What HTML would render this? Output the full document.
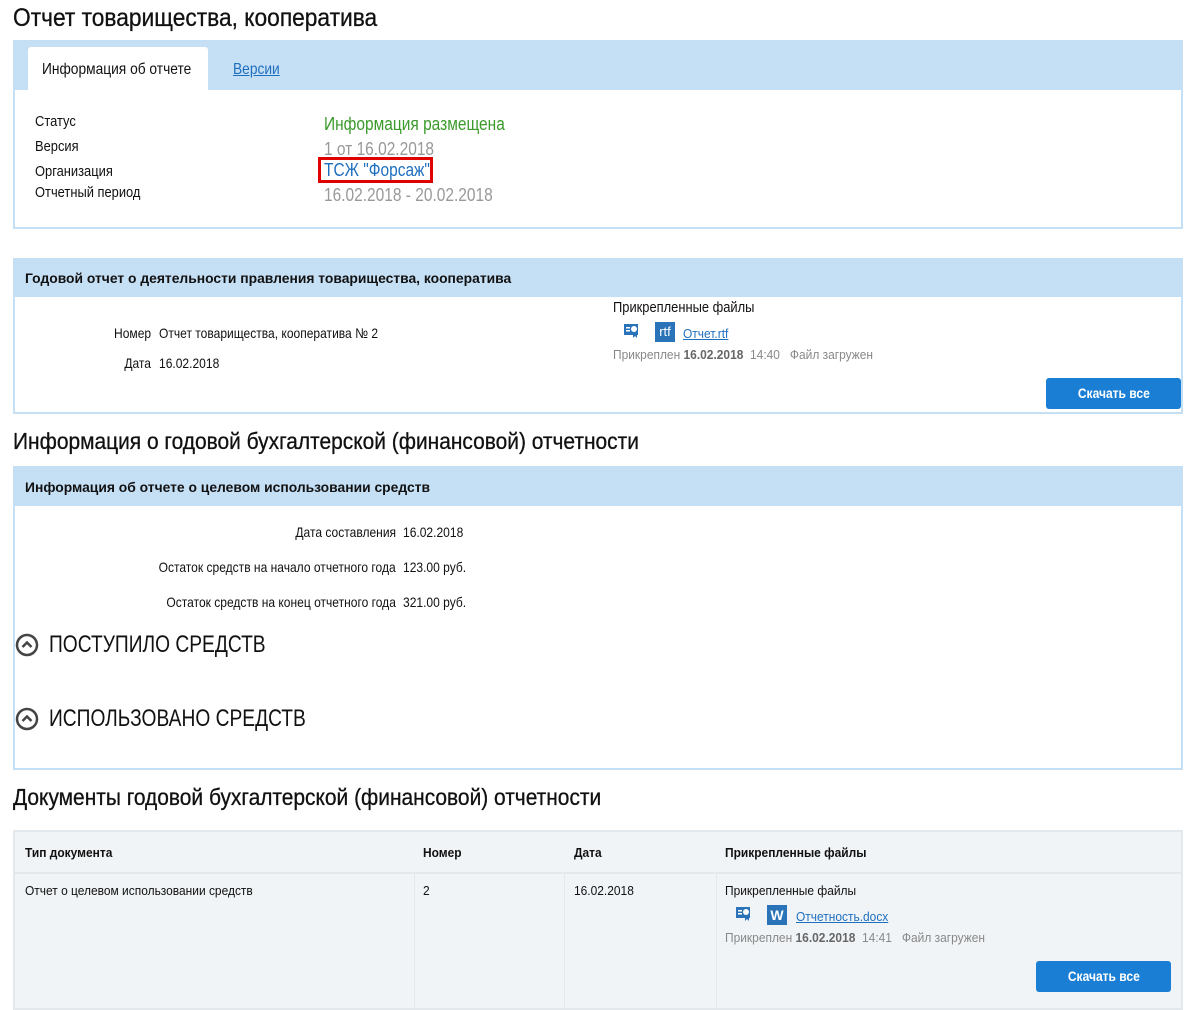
<!DOCTYPE html>
<html><head><meta charset="utf-8"><style>
*{margin:0;padding:0;box-sizing:border-box}
body{width:1198px;height:1004px;background:#fff;font-family:"Liberation Sans",sans-serif;color:#111;position:relative;overflow:hidden}
.a{position:absolute;white-space:nowrap}
.c{transform:scaleX(.86);transform-origin:0 50%}
.h{transform:scaleX(.91);transform-origin:0 50%;-webkit-text-stroke:.3px #111}
.s{transform:scaleX(.92);transform-origin:0 50%}
.b{transform:scaleX(.99);transform-origin:0 50%}
.r{transform:scaleX(.86);transform-origin:100% 50%;text-align:right}
.box{position:absolute;left:13px;width:1170px;border:2px solid #c5dff5;background:#fff}
.hd{position:absolute;left:0;right:0;top:0;background:#c5dff5}
.btn{position:absolute;background:#1a7fd4;border-radius:3px;color:#fff;font-size:14px;font-weight:bold;text-align:center}
a{color:#1f6fbf}
.ic{position:absolute;width:20px;height:20px;background:#2b73b8;color:#fff;font-size:13px;text-align:center;line-height:20px}
</style></head><body>
<div class="a h" style="left:13px;top:4px;font-size:25px">Отчет товарищества, кооператива</div>

<div class="box" style="top:40px;height:189px">
 <div class="hd" style="height:48px"></div>
 <div style="position:absolute;left:13px;top:5px;width:180px;height:43px;background:#fff;border-radius:3px 3px 0 0"></div>
 <div class="a c" style="left:27px;top:19px;font-size:16px">Информация об отчете</div>
 <div class="a c" style="left:218px;top:19px;font-size:16px"><a href="#">Версии</a></div>
 <div class="a c" style="left:20px;top:71px;font-size:15px">Статус</div>
 <div class="a c" style="left:20px;top:96px;font-size:15px">Версия</div>
 <div class="a c" style="left:20px;top:121px;font-size:15px">Организация</div>
 <div class="a c" style="left:20px;top:142px;font-size:15px">Отчетный период</div>
 <div class="a c" style="left:309px;top:72px;font-size:18px;color:#3a9a2a">Информация размещена</div>
 <div class="a c" style="left:309px;top:97px;font-size:18px;color:#999">1 от 16.02.2018</div>
 <div style="position:absolute;left:303px;top:115px;width:115px;height:26px;border:3px solid #e00000"></div>
 <div class="a c" style="left:309px;top:118px;font-size:18px;color:#1f6fbf">ТСЖ "Форсаж"</div>
 <div class="a c" style="left:309px;top:143px;font-size:18px;color:#999">16.02.2018 - 20.02.2018</div>
</div>

<div class="box" style="top:258px;height:156px">
 <div class="hd" style="height:37px"></div>
 <div class="a b" style="left:10px;top:10px;font-size:14px;font-weight:bold">Годовой отчет о деятельности правления товарищества, кооператива</div>
 <div class="a r" style="right:1030px;top:65px;font-size:14px">Номер</div>
 <div class="a c" style="left:144px;top:65px;font-size:14px">Отчет товарищества, кооператива № 2</div>
 <div class="a r" style="right:1030px;top:95px;font-size:14px">Дата</div>
 <div class="a c" style="left:144px;top:95px;font-size:14px">16.02.2018</div>
 <div class="a c" style="left:598px;top:39px;font-size:15px">Прикрепленные файлы</div>
 <svg class="a" style="left:608px;top:62px" width="18" height="18" viewBox="0 0 18 18"><rect x="1" y="2" width="14" height="11" fill="#2b73b8"/><rect x="3" y="5" width="4" height="1.5" fill="#fff"/><rect x="3" y="8" width="4" height="1.5" fill="#fff"/><circle cx="11" cy="7" r="3" fill="#fff"/><path d="M10 10l0 6 2-2 2 2v-6z" fill="#2b73b8"/></svg>
 <div class="ic" style="left:640px;top:62px">rtf</div>
 <div class="a s" style="left:668px;top:66px;font-size:13px"><a href="#">Отчет.rtf</a></div>
 <div class="a s" style="left:598px;top:87px;font-size:13px;color:#888">Прикреплен <b style="color:#666">16.02.2018</b>&nbsp; 14:40 &nbsp; Файл загружен</div>
 <div class="btn" style="left:1031px;top:118px;width:135px;height:31px;line-height:31px"><span style="display:inline-block;transform:scaleX(.86)">Скачать все</span></div>
</div>

<div class="a h" style="left:13px;top:428px;font-size:23px">Информация о годовой бухгалтерской (финансовой) отчетности</div>

<div class="box" style="top:466px;height:304px">
 <div class="hd" style="height:38px"></div>
 <div class="a b" style="left:10px;top:11px;font-size:14px;font-weight:bold">Информация об отчете о целевом использовании средств</div>
 <div class="a r" style="right:785px;top:56px;font-size:14px">Дата составления</div>
 <div class="a c" style="left:388px;top:56px;font-size:14px">16.02.2018</div>
 <div class="a r" style="right:785px;top:91px;font-size:14px">Остаток средств на начало отчетного года</div>
 <div class="a c" style="left:388px;top:91px;font-size:14px">123.00 руб.</div>
 <div class="a r" style="right:785px;top:126px;font-size:14px">Остаток средств на конец отчетного года</div>
 <div class="a c" style="left:388px;top:126px;font-size:14px">321.00 руб.</div>
 <svg class="a" style="left:0;top:165px" width="24" height="24" viewBox="0 0 24 24"><circle cx="12" cy="12" r="10" fill="none" stroke="#444" stroke-width="2.5"/><path d="M7.5 14l4.5-4.5 4.5 4.5" fill="none" stroke="#444" stroke-width="2.5"/></svg>
 <div class="a" style="left:34px;top:163px;font-size:24px;transform:scaleX(.8);transform-origin:0 50%">ПОСТУПИЛО СРЕДСТВ</div>
 <svg class="a" style="left:0;top:239px" width="24" height="24" viewBox="0 0 24 24"><circle cx="12" cy="12" r="10" fill="none" stroke="#444" stroke-width="2.5"/><path d="M7.5 14l4.5-4.5 4.5 4.5" fill="none" stroke="#444" stroke-width="2.5"/></svg>
 <div class="a" style="left:34px;top:237px;font-size:24px;transform:scaleX(.8);transform-origin:0 50%">ИСПОЛЬЗОВАНО СРЕДСТВ</div>
</div>

<div class="a h" style="left:13px;top:784px;font-size:23px">Документы годовой бухгалтерской (финансовой) отчетности</div>

<div style="position:absolute;left:13px;top:830px;width:1170px;height:180px;background:#f0f4f7;border:2px solid #e3e8ec">
 <div style="position:absolute;left:0;right:0;top:40px;height:2px;background:#e3e8ec"></div>
 <div style="position:absolute;left:399px;top:42px;width:1px;bottom:0;background:#e3e8ec"></div>
 <div style="position:absolute;left:549px;top:42px;width:1px;bottom:0;background:#e3e8ec"></div>
 <div style="position:absolute;left:701px;top:42px;width:1px;bottom:0;background:#e3e8ec"></div>
 <div class="a s" style="left:10px;top:13px;font-size:13px;font-weight:bold">Тип документа</div>
 <div class="a s" style="left:408px;top:13px;font-size:13px;font-weight:bold">Номер</div>
 <div class="a s" style="left:559px;top:13px;font-size:13px;font-weight:bold">Дата</div>
 <div class="a s" style="left:710px;top:13px;font-size:13px;font-weight:bold">Прикрепленные файлы</div>
 <div class="a s" style="left:10px;top:51px;font-size:13px">Отчет о целевом использовании средств</div>
 <div class="a s" style="left:408px;top:51px;font-size:13px">2</div>
 <div class="a s" style="left:559px;top:51px;font-size:13px">16.02.2018</div>
 <div class="a s" style="left:710px;top:51px;font-size:13px">Прикрепленные файлы</div>
 <svg class="a" style="left:720px;top:73px" width="18" height="18" viewBox="0 0 18 18"><rect x="1" y="2" width="14" height="11" fill="#2b73b8"/><rect x="3" y="5" width="4" height="1.5" fill="#fff"/><rect x="3" y="8" width="4" height="1.5" fill="#fff"/><circle cx="11" cy="7" r="3" fill="#fff"/><path d="M10 10l0 6 2-2 2 2v-6z" fill="#2b73b8"/></svg>
 <div class="ic" style="left:752px;top:73px;font-weight:bold;font-size:14px">W</div>
 <div class="a s" style="left:781px;top:77px;font-size:13px"><a href="#">Отчетность.docx</a></div>
 <div class="a s" style="left:710px;top:98px;font-size:13px;color:#888">Прикреплен <b style="color:#666">16.02.2018</b>&nbsp; 14:41 &nbsp; Файл загружен</div>
 <div class="btn" style="left:1021px;top:129px;width:135px;height:31px;line-height:31px"><span style="display:inline-block;transform:scaleX(.86)">Скачать все</span></div>
</div>
</body></html>
